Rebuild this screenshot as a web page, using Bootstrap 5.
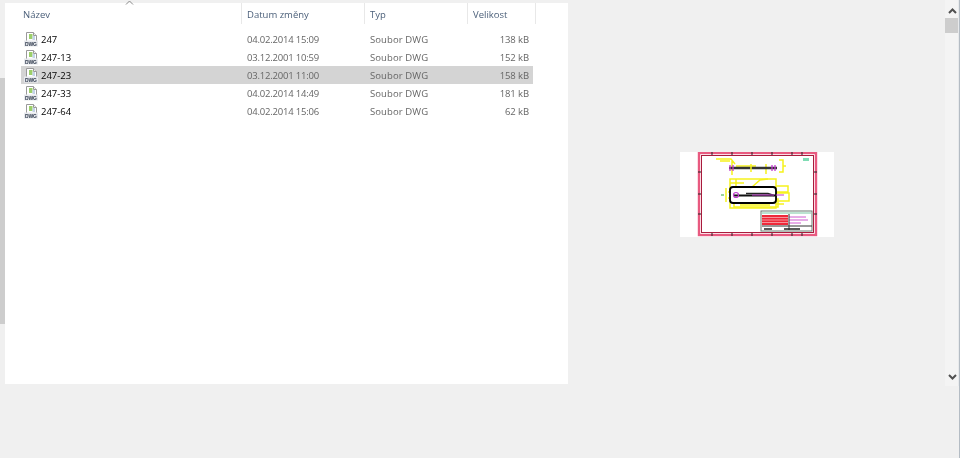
<!DOCTYPE html>
<html lang="cs">
<head>
<meta charset="utf-8">
<title>Soubory DWG</title>
<link href="https://cdn.jsdelivr.net/npm/bootstrap@5.3.0/dist/css/bootstrap.min.css" rel="stylesheet">
<style>
html,body{height:100%;}
body{background:#f0f0f0;font-family:"Open Sans","Noto Sans",sans-serif;font-size:9.5px;line-height:18px;color:#000;overflow:hidden;}
.shell{width:960px;height:458px;}
.edge-strip{width:5px;height:381px;margin-top:3px;flex:none;}
.edge-thumb{width:5px;height:246px;margin-top:75px;background:#cdcdcd;}
.file-panel{width:563px;height:381px;margin-top:3px;background:#fff;flex:none;filter:blur(.25px);}
.head-row{height:21px;position:relative;color:#4c607a;}
.head-cell{height:21px;padding:3px 0 0 5px;border-right:1px solid #e8e8e8;flex:none;}
.sort-mark{position:absolute;left:120px;top:-3px;}
.c-name{width:237px;padding-left:18px;}
.c-date{width:123px;}
.c-type{width:103px;}
.c-size{width:68px;}
.file-list{margin-top:6px;margin-left:16px;width:512px;}
.file-row{height:18px;color:#666;padding-top:1px;}
.file-row.is-sel{background:#d4d4d4;}
.f-name{width:221px;color:#000;flex:none;display:flex;align-items:center;padding-left:3px;gap:3px;height:17px;}
.f-date{width:123px;flex:none;padding-left:5px;letter-spacing:-.2px;}
.f-type{width:103px;flex:none;padding-left:5px;letter-spacing:.1px;}
.f-size{width:61px;flex:none;text-align:right;letter-spacing:-.1px;}
.dwg-word{font:700 5px "Liberation Sans",sans-serif;fill:#2f3a4c;}
.preview{flex:1 1 auto;height:388px;display:flex;align-items:center;justify-content:center;}
.thumb-sheet{width:154px;height:85px;background:#fff;display:block;filter:blur(.4px);}
.scroll-col{width:15px;height:458px;flex:none;border-right:1px solid #b4bcc4;}
.scroll-rail{height:386px;display:flex;flex-direction:column;background:#f4f4f4;border-right:1px solid #e8eaec;}
.s-arrow{height:18px;display:flex;align-items:center;justify-content:center;flex:none;padding-left:1px;}
.s-arrow-up{margin-top:2px;margin-bottom:-2px;}
.s-thumb{height:15px;background:#cdcdcd;flex:none;}
.s-space{flex:1 1 auto;}
</style>
</head>
<body>
<div class="shell d-flex">
  <div class="edge-strip"><div class="edge-thumb"></div></div>
  <div class="file-panel">
    <div class="head-row d-flex">
      <div class="head-cell c-name">Název</div>
      <div class="head-cell c-date">Datum změny</div>
      <div class="head-cell c-type">Typ</div>
      <div class="head-cell c-size">Velikost</div>
      <svg class="sort-mark" width="9" height="6" viewBox="0 0 9 6"><path d="M1 4.500 4.500 1 8 4.500" fill="none" stroke="#8a8a8a"/></svg>
    </div>
    <div class="file-list">
      <div class="file-row d-flex"><div class="f-name"><svg width="14" height="15" viewBox="0 0 14 15"><path d="M2.500.5h7l3 3v6h-10z" fill="#fff" stroke="#9a9a9a"/><path d="M9.500.5v3h3" fill="#eee" stroke="#9a9a9a"/><rect x="5" y="2" width="3.500" height="5" fill="#9ccf6a"/><rect x="8.500" y="4" width="2.500" height="4" fill="#c4d4e8"/><rect y="8.500" width="14" height="6" fill="#e8eaee"/><text class="dwg-word" x="7" y="13.600" text-anchor="middle" textLength="12">DWG</text></svg>247</div><div class="f-date">04.02.2014 15:09</div><div class="f-type">Soubor DWG</div><div class="f-size">138 kB</div></div>
      <div class="file-row d-flex"><div class="f-name"><svg width="14" height="15" viewBox="0 0 14 15"><path d="M2.500.5h7l3 3v6h-10z" fill="#fff" stroke="#9a9a9a"/><path d="M9.500.5v3h3" fill="#eee" stroke="#9a9a9a"/><rect x="5" y="2" width="3.500" height="5" fill="#9ccf6a"/><rect x="8.500" y="4" width="2.500" height="4" fill="#c4d4e8"/><rect y="8.500" width="14" height="6" fill="#e8eaee"/><text class="dwg-word" x="7" y="13.600" text-anchor="middle" textLength="12">DWG</text></svg>247-13</div><div class="f-date">03.12.2001 10:59</div><div class="f-type">Soubor DWG</div><div class="f-size">152 kB</div></div>
      <div class="file-row is-sel d-flex"><div class="f-name"><svg width="14" height="15" viewBox="0 0 14 15"><path d="M2.500.5h7l3 3v6h-10z" fill="#fff" stroke="#9a9a9a"/><path d="M9.500.5v3h3" fill="#eee" stroke="#9a9a9a"/><rect x="5" y="2" width="3.500" height="5" fill="#9ccf6a"/><rect x="8.500" y="4" width="2.500" height="4" fill="#c4d4e8"/><rect y="8.500" width="14" height="6" fill="#e8eaee"/><text class="dwg-word" x="7" y="13.600" text-anchor="middle" textLength="12">DWG</text></svg>247-23</div><div class="f-date">03.12.2001 11:00</div><div class="f-type">Soubor DWG</div><div class="f-size">158 kB</div></div>
      <div class="file-row d-flex"><div class="f-name"><svg width="14" height="15" viewBox="0 0 14 15"><path d="M2.500.5h7l3 3v6h-10z" fill="#fff" stroke="#9a9a9a"/><path d="M9.500.5v3h3" fill="#eee" stroke="#9a9a9a"/><rect x="5" y="2" width="3.500" height="5" fill="#9ccf6a"/><rect x="8.500" y="4" width="2.500" height="4" fill="#c4d4e8"/><rect y="8.500" width="14" height="6" fill="#e8eaee"/><text class="dwg-word" x="7" y="13.600" text-anchor="middle" textLength="12">DWG</text></svg>247-33</div><div class="f-date">04.02.2014 14:49</div><div class="f-type">Soubor DWG</div><div class="f-size">181 kB</div></div>
      <div class="file-row d-flex"><div class="f-name"><svg width="14" height="15" viewBox="0 0 14 15"><path d="M2.500.5h7l3 3v6h-10z" fill="#fff" stroke="#9a9a9a"/><path d="M9.500.5v3h3" fill="#eee" stroke="#9a9a9a"/><rect x="5" y="2" width="3.500" height="5" fill="#9ccf6a"/><rect x="8.500" y="4" width="2.500" height="4" fill="#c4d4e8"/><rect y="8.500" width="14" height="6" fill="#e8eaee"/><text class="dwg-word" x="7" y="13.600" text-anchor="middle" textLength="12">DWG</text></svg>247-64</div><div class="f-date">04.02.2014 15:06</div><div class="f-type">Soubor DWG</div><div class="f-size">62 kB</div></div>
    </div>
  </div>
  <div class="preview">
    <svg class="thumb-sheet" viewBox="0 0 154 85" role="img" aria-label="Náhled výkresu">
      <rect x="19" y="1" width="117" height="82" fill="#fff" stroke="#e85a80" stroke-width="2.400"/>
      <rect x="21.500" y="3.500" width="112" height="77" fill="#fff" stroke="#a81c3c"/>
      <g fill="none" stroke="#f6f21c" stroke-width="1.500">
        <path d="M36 7h15l4 5M52 9v14M56 14h20M99 8h4v12h-4M86 12v10M103 14h3M40 9h10"/>
        <rect x="50" y="27" width="46" height="29"/>
        <rect x="54" y="47" width="44" height="8"/>
        <path d="M50 31h14M56 27v7M96 34h12v6h-12M96 41h13v8h-13M46 36v14M72 35l8-7 8-1M96 52h8M48 40h4M48 46h4M60 53h30"/>
      </g>
      <path d="M49 16h48" stroke="#333" stroke-width="2.400"/>
      <path d="M50 13v6M53 13v6M92 13v6M95 13v6" stroke="#c33bd0" stroke-width="1.300"/>
      <path d="M71 12v8" stroke="#f6f21c" stroke-width="1.500"/>
      <rect x="50" y="35" width="46" height="16" rx="3" fill="#fff" stroke="#000" stroke-width="1.800"/>
      <path d="M54 43.500h42" stroke="#111" stroke-width="2.200"/>
      <path d="M66 41.500h22l6 2" fill="none" stroke="#222" stroke-width="1.500"/>
      <path d="M72 43h22M96 43h8" stroke="#c33bd0"/>
      <circle cx="56" cy="43" r="2.500" fill="none" stroke="#c33bd0" stroke-width="1.200"/>
      <path d="M41 43h3" stroke="#3a3"/>
      <g>
        <rect x="81" y="59" width="51" height="20" fill="#fff" stroke="#6a7a70"/>
        <path d="M82 61h49" stroke="#7ac8a4"/>
        <rect x="82" y="63" width="26" height="10" fill="#ee2a3a"/>
        <path d="M82 65.500h26M82 68h26M82 70.500h26" stroke="#fff" stroke-width=".5"/>
        <path d="M109 65h17M109 68h19M109 71h12" stroke="#d05ad0"/>
        <path d="M109 62v16M82 74h50" stroke="#333"/>
        <path d="M84 77h8M104 77h16" stroke="#222" stroke-width="1.500"/>
      </g>
      <path d="M32 0v3M52 0v3M72 0v3M92 0v3M112 0v3M122 0v3M32 81v3M52 81v3M72 81v3M92 81v3M112 81v3M122 81v3M18 20h3M18 42h3M18 62h3M134 20h3M134 42h3M134 62h3" stroke="#222"/>
      <path d="M123 6h6v3h-6z" fill="#7fdcb4"/>
    </svg>
  </div>
  <div class="scroll-col">
    <div class="scroll-rail">
      <div class="s-arrow s-arrow-up"><svg width="9" height="6" viewBox="0 0 9 6"><path d="M1 5 4.500 1.500 8 5" fill="none" stroke="#505050" stroke-width="2"/></svg></div>
      <div class="s-thumb"></div>
      <div class="s-space"></div>
      <div class="s-arrow"><svg width="9" height="6" viewBox="0 0 9 6"><path d="M1 1 4.500 4.500 8 1" fill="none" stroke="#505050" stroke-width="2"/></svg></div>
    </div>
  </div>
</div>
<script src="https://cdn.jsdelivr.net/npm/bootstrap@5.3.0/dist/js/bootstrap.bundle.min.js"></script>
</body>
</html>
